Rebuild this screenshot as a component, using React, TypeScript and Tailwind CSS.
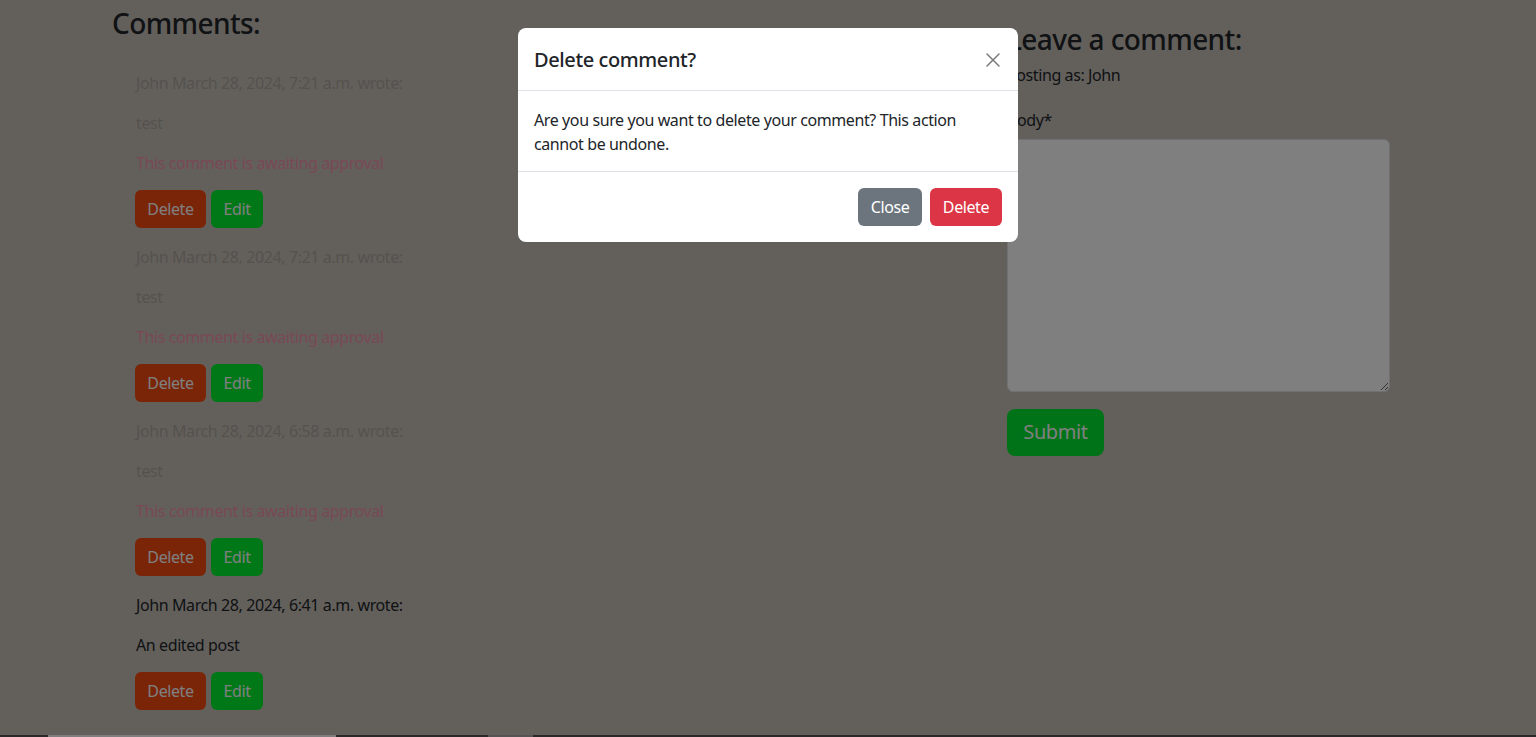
import { X } from "lucide-react";

type Comment = {
  author: string;
  date: string;
  body: string;
  approved: boolean;
};

const comments: Comment[] = [
  { author: "John", date: "March 28, 2024, 7:21 a.m.", body: "test", approved: false },
  { author: "John", date: "March 28, 2024, 7:21 a.m.", body: "test", approved: false },
  { author: "John", date: "March 28, 2024, 6:58 a.m.", body: "test", approved: false },
  { author: "John", date: "March 28, 2024, 6:41 a.m.", body: "An edited post", approved: true },
];

function CommentItem({ c }: { c: Comment }) {
  return (
    <div className="mb-[17px]">
      <div className={c.approved ? "text-[#212529]" : "text-[#aba59d]"}>
        <p className="mb-4 leading-6">
          {c.author} {c.date} wrote:
        </p>
        <p className="mb-4 leading-6">{c.body}</p>
        {!c.approved && (
          <p className="mb-4 leading-6 text-[#f192aa]">This comment is awaiting approval</p>
        )}
      </div>
      <div className="flex gap-[5px] -ml-px -mt-px">
        <button className="h-[38px] w-[71px] rounded-md bg-[#f44810] text-white leading-6">
          Delete
        </button>
        <button className="h-[38px] w-[52px] rounded-md bg-[#00f030] text-white leading-6">
          Edit
        </button>
      </div>
    </div>
  );
}

function DeleteModal() {
  return (
    <div className="fixed inset-0 z-50 bg-black/50">
      <div className="mx-auto mt-[28px] w-[500px] rounded-lg bg-white text-[#212529]">
        <div className="flex h-[63px] items-center justify-between border-b border-[#dee2e6] px-4 pt-px">
          <h5 className="text-[20px] leading-[1.5] font-medium">Delete comment?</h5>
          <button className="-mr-[3px] flex h-6 w-6 items-center justify-center text-[#7a7a7a]">
            <X className="h-[26px] w-[26px]" strokeWidth={1.5} />
          </button>
        </div>
        <div className="border-b border-[#dee2e6] px-4 pt-[17px] pb-[15px]">
          <p className="leading-6">
            Are you sure you want to delete your comment? This action
            <br />
            cannot be undone.
          </p>
        </div>
        <div className="flex justify-end px-3 py-3">
          <button className="m-1 h-[38px] w-[64px] rounded-md bg-[#6c757d] text-white leading-6">
            Close
          </button>
          <button className="m-1 h-[38px] w-[72px] rounded-md bg-[#dc3545] text-white leading-6">
            Delete
          </button>
        </div>
      </div>
    </div>
  );
}

export default function App() {
  return (
    <div className="relative h-[737px] overflow-hidden bg-[#c6c0b8] font-['Noto_Sans',sans-serif] text-[16px] tracking-[-0.4px] text-[#212529]">
      <div className="flex h-[735px]">
        {/* Comments list */}
        <div className="w-[1007px] shrink-0 pl-[112px] pt-[7px]">
          <h3 className="text-[28px] leading-[1.2] font-medium tracking-[-0.6px]">Comments:</h3>
          <div className="mt-[30px] pl-6">
            {comments.map((c, i) => (
              <CommentItem key={i} c={c} />
            ))}
          </div>
        </div>

        {/* Comment form */}
        <div className="w-[383px] pt-[23px]">
          <h3 className="mb-[6px] text-[28px] leading-[1.2] font-medium tracking-[-0.6px]">
            Leave a comment:
          </h3>
          <p className="mb-[21px] leading-6">Posting as: John</p>
          <label className="mb-[7px] block leading-6">Body*</label>
          <textarea className="block h-[253px] w-[383px] rounded-md border border-[#dee2e6] bg-white" />
          <button className="mt-[17px] h-[47px] w-[97px] rounded-lg bg-[#00e630] text-[20px] leading-[30px] text-white">
            Submit
          </button>
        </div>
      </div>

      {/* footer edge */}
      <div className="flex h-[2px] bg-[#545454]">
        <div className="ml-[48px] w-[288px] bg-white" />
        <div className="ml-[152px] w-[45px] bg-[#aaaaaa]" />
      </div>

      <DeleteModal />
    </div>
  );
}
